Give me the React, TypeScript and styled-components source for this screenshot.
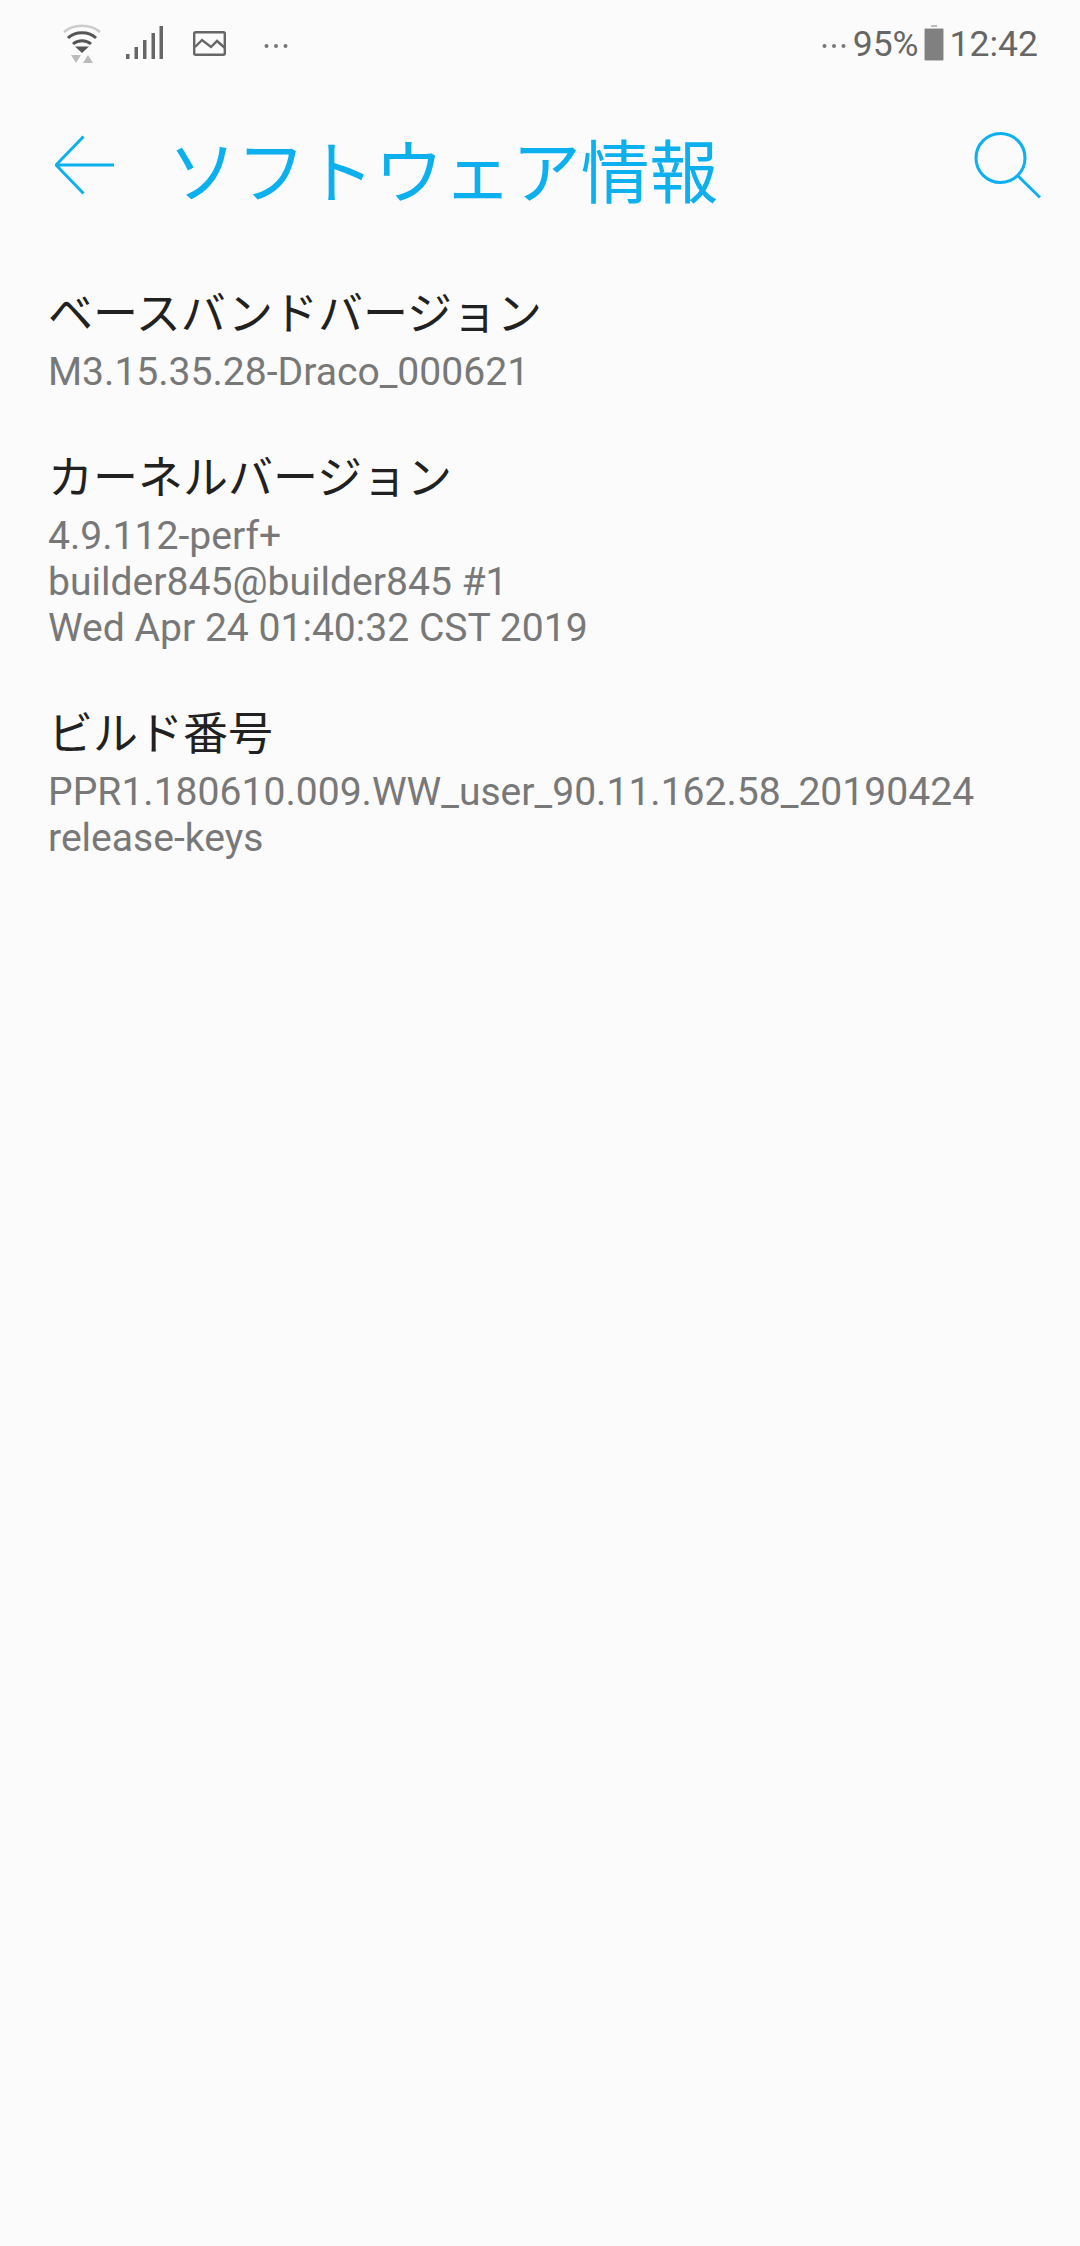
import React, { ReactElement } from 'react'
import styled, { createGlobalStyle } from 'styled-components'

const GlobalStyle = createGlobalStyle`
  html, body {
    margin: 0;
    padding: 0;
    background: #fbfbfb;
  }
  body {
    font-family: Roboto, "Noto Sans CJK JP", sans-serif;
  }
`

const Screen = styled.div`
  width: 1080px;
  height: 2246px;
  background: #fbfbfb;
  overflow: hidden;
`

const StatusBar = styled.div`
  height: 88px;
  padding: 0 42px 0 63px;
  display: flex;
  align-items: center;
  justify-content: space-between;
  box-sizing: border-box;
`

const StatusGroup = styled.div`
  display: flex;
  align-items: center;
`

const StatusIcon = styled.svg<{ $gap: number }>`
  display: block;
  flex: none;
  margin-right: ${(p) => p.$gap}px;
`

const StatusText = styled.span`
  font-size: 35.5px;
  color: #666;
  line-height: 40px;
`

const Toolbar = styled.div`
  height: 156px;
  padding: 0 39px 2px 55px;
  display: flex;
  align-items: center;
  box-sizing: border-box;
`

const Title = styled.h1`
  margin: 20px 0 0 53px;
  flex: 1;
  font-size: 68.8px;
  font-weight: 400;
  color: #0cb0ee;
  line-height: 80px;
  white-space: nowrap;
`

const List = styled.div`
  padding: 32.5px 48px 0;
  display: flex;
  flex-direction: column;
  gap: 46.2px;
`

const Name = styled.div`
  padding-top: 4px;
  font-size: 45px;
  line-height: 68px;
  color: #212121;
`

const Value = styled.div`
  font-size: 39.1px;
  line-height: 46px;
  color: #787878;
  white-space: pre-line;
`

const items = [
  { name: 'ベースバンドバージョン', value: 'M3.15.35.28-Draco_000621' },
  {
    name: 'カーネルバージョン',
    value: '4.9.112-perf+\nbuilder845@builder845 #1\nWed Apr 24 01:40:32 CST 2019',
  },
  {
    name: 'ビルド番号',
    value: 'PPR1.180610.009.WW_user_90.11.162.58_20190424\nrelease-keys',
  },
]

function Dots({ gap }: { gap: number }): ReactElement {
  return (
    <StatusIcon $gap={gap} width="24" height="40" viewBox="0 0 24 40">
      <circle cx="2.500" cy="22" r="2" fill="#777" />
      <circle cx="12" cy="22" r="2" fill="#777" />
      <circle cx="21.500" cy="22" r="2" fill="#777" />
    </StatusIcon>
  )
}

function App(): ReactElement {
  return (
    <Screen>
      <GlobalStyle />
      <StatusBar>
        <StatusGroup>
          <StatusIcon $gap={25} width="38" height="40" viewBox="0 0 38 40">
            <path d="M1 8 C10 -0.500 28 -0.500 37 8" fill="none" stroke="#ccc" strokeWidth="2.500" />
            <path d="M5 14 C12 7 26 7 33 14" fill="none" stroke="#555" strokeWidth="3" />
            <path d="M10 20 C15 15.500 23 15.500 28 20" fill="none" stroke="#555" strokeWidth="3" />
            <path d="M12 22.500 L26 22.500 L19 29 Z" fill="#555" />
            <path d="M8 31 L18 31 L13 39 Z" fill="#bbb" />
            <path d="M20 39 L30 39 L25 31 Z" fill="#bbb" />
          </StatusIcon>
          <StatusIcon $gap={30} width="37" height="40" viewBox="0 0 37 40">
            <rect x="0" y="30" width="3.500" height="5" fill="#666" />
            <rect x="8.500" y="23" width="3.500" height="12" fill="#666" />
            <rect x="17" y="16" width="3.500" height="19" fill="#666" />
            <rect x="25.500" y="9" width="3.500" height="26" fill="#666" />
            <rect x="33.500" y="2" width="3.500" height="33" fill="#666" />
          </StatusIcon>
          <StatusIcon $gap={38} width="33" height="40" viewBox="0 0 33 40">
            <rect x="1.200" y="8.200" width="30.600" height="22.600" rx="1.500" fill="none" stroke="#666" strokeWidth="2.400" />
            <path d="M2 23 L9 16 L18 23 L24 17 L32 24" fill="none" stroke="#666" strokeWidth="2.400" />
          </StatusIcon>
          <Dots gap={0} />
        </StatusGroup>
        <StatusGroup>
          <Dots gap={7} />
          <StatusText>95%</StatusText>
          <StatusIcon $gap={6} width="25" height="40" viewBox="0 0 25 40">
            <rect x="12" y="1" width="6" height="2" fill="#bbb" />
            <rect x="5" y="4" width="20" height="33" rx="2" fill="#c4c4c4" />
            <rect x="6" y="5" width="18" height="31" fill="#808080" />
          </StatusIcon>
          <StatusText>12:42</StatusText>
        </StatusGroup>
      </StatusBar>
      <Toolbar>
        <svg width="60" height="60" viewBox="0 0 60 60">
          <path d="M28.500 1.500 L1 30 L28.500 58.500 M1 30 L59 30" fill="none" stroke="#0cb0ee" strokeWidth="3" />
        </svg>
        <Title>ソフトウェア情報</Title>
        <svg width="67" height="67" viewBox="0 0 67 67">
          <circle cx="26.500" cy="26" r="24.500" fill="none" stroke="#0cb0ee" strokeWidth="3" />
          <path d="M44 44 L66 65.500" fill="none" stroke="#0cb0ee" strokeWidth="3" />
        </svg>
      </Toolbar>
      <List>
        {items.map((item) => (
          <div key={item.name}>
            <Name>{item.name}</Name>
            <Value>{item.value}</Value>
          </div>
        ))}
      </List>
    </Screen>
  )
}

export default App
